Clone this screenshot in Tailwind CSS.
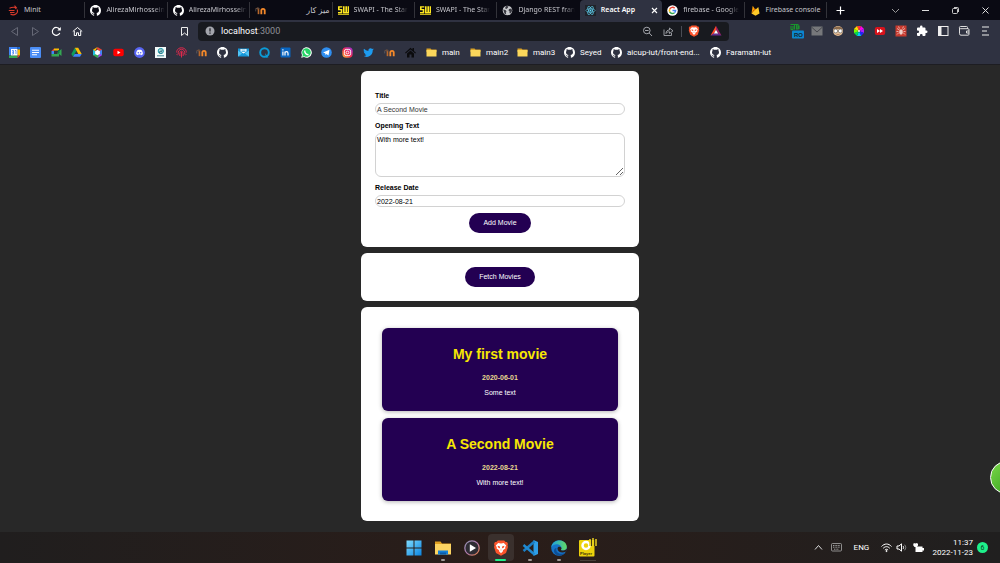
<!DOCTYPE html>
<html lang="en">
<head>
<meta charset="utf-8">
<title>React App</title>
<script src="https://cdn.jsdelivr.net/npm/@tailwindcss/browser@4"></script>
</head>
<body class="bg-[#282828]">
<svg class="hidden" aria-hidden="true">
  <symbol id="github" viewBox="0 0 16 16"><path fill="#fff" d="M8 0C3.58 0 0 3.58 0 8c0 3.54 2.29 6.53 5.47 7.59.4.07.55-.17.55-.38 0-.19-.01-.82-.01-1.49-2.01.37-2.53-.49-2.69-.94-.09-.23-.48-.94-.82-1.13-.28-.15-.68-.52-.01-.53.63-.01 1.08.58 1.23.82.72 1.21 1.87.87 2.33.66.07-.52.28-.87.51-1.07-1.78-.2-3.64-.89-3.64-3.95 0-.87.31-1.59.82-2.15-.08-.2-.36-1.02.08-2.12 0 0 .67-.21 2.2.82.64-.18 1.32-.27 2-.27s1.36.09 2 .27c1.53-1.04 2.2-.82 2.2-.82.44 1.1.16 1.92.08 2.12.51.56.82 1.27.82 2.15 0 3.07-1.87 3.75-3.65 3.95.29.25.54.73.54 1.48 0 1.07-.01 1.93-.01 2.2 0 .21.15.46.55.38A8.01 8.01 0 0 0 16 8c0-4.42-3.58-8-8-8z"/></symbol>
  <symbol id="folder" viewBox="0 0 11 11"><path fill="#d9a227" d="M.5 1.500h4l1 1h5V5H.5z"/><path fill="#fbd75b" d="M.5 3h10v6.500H.5z"/></symbol>
  <symbol id="moodle" viewBox="0 0 12 12"><path d="M0 4 3 2.500l2.500 1L3 5z" fill="#6b4f3e"/><path d="M.8 4.500V7" stroke="#777" stroke-width=".6"/><path d="M3.800 10V4.500" stroke="#b8682c" stroke-width="1.800"/><path d="M6.900 10V6c0-2.400 3.700-2.400 3.700 0v4" fill="none" stroke="#f5892a" stroke-width="2"/></symbol>
  <symbol id="brave" viewBox="0 0 16 16"><path fill="#fb542b" d="M4.800.6h6.400l1.400 1.500 1.400-.2 1 2-.5 1.400.5 1.600-2 6L8 15.800l-5-2.900-2-6 .5-1.600L1 3.900l1-2 1.400.2z"/><path fill="#fff" d="M5.200 3 8 3.400l2.800-.4 2.400 2.600-1 1.600.2 1.300-2.600 1.700.3.800L8 13.200 5.900 11l.3-.8-2.600-1.700.2-1.300-1-1.600z"/><path fill="#fb542b" d="m4.600 5.800 2.100.5.500 2.100L5 7.400zM11.400 5.800l-2.100.5-.5 2.100L11 7.400zM7.100 9.800h1.800l-.9.800z"/></symbol>
  <symbol id="swapi" viewBox="0 0 11 11"><path d="M0 1.200h4.300v1.400H1.600v1.300h2.700v4.600H0V7.100h2.700V5.200H0zM5 1.200h1.600v5.700h.8V1.200H9v5.700h.6V1.200H11v7.300H5zM0 9.200h11v.8H0z" fill="#ffe81f"/></symbol>
</svg>

<div class="flex min-h-screen flex-col">
  <header class="border-b border-[#1d1d22] bg-[#2f3241] font-['Noto_Sans','DejaVu_Sans',sans-serif] text-[7px] text-white">
    <div class="flex h-5 items-center justify-between bg-[#0a0a13]">
      <nav aria-label="Tabs" class="flex h-5 min-w-0 items-center pl-[3px] text-[#c6c6cc]">
        <div class="grid h-5 w-[824px] min-w-0 grid-cols-10 items-center">
        <a href="#" class="flex h-4 min-w-0 items-center gap-[5px] border-r border-[#33333a] pl-[5px]">
          <svg class="size-[11px] shrink-0" viewBox="0 0 11 11" fill="none" stroke="#d83a2b"><path d="M1.500 3.200c2-1 5-1 7-.5M6.500.6l2 2.200-1.500 1M.8 5.500h5.700M2 7.500h4.500M9 4.500c2 3.500-3 7-6.500 4.500" stroke-width="1.100"/></svg>
          <span class="whitespace-nowrap">Minit</span></a>
        <a href="#" class="flex h-4 min-w-0 items-center gap-[5px] border-r border-[#33333a] pr-px pl-[5px]">
          <svg class="size-[11px] shrink-0"><use href="#github"/></svg>
          <span class="whitespace-nowrap [mask-image:linear-gradient(to_right,#000_80%,transparent)]">AlirezaMirhossein</span></a>
        <a href="#" class="flex h-4 min-w-0 items-center gap-[5px] border-r border-[#33333a] pr-px pl-[5px]">
          <svg class="size-[11px] shrink-0"><use href="#github"/></svg>
          <span class="whitespace-nowrap [mask-image:linear-gradient(to_right,#000_80%,transparent)]">AlirezaMirhossein</span></a>
        <a href="#" class="flex h-4 min-w-0 items-center justify-between border-r border-[#33333a] pr-[2px] pl-[5px]">
          <svg class="size-[11px] shrink-0"><use href="#moodle"/></svg>
          <span dir="rtl" lang="fa" class="text-[8px] leading-[10px]">میز کار</span></a>
        <a href="#" class="flex h-4 min-w-0 items-center gap-[5px] border-r border-[#33333a] pr-px pl-[5px]">
          <svg class="size-[11px] shrink-0"><use href="#swapi"/></svg>
          <span class="whitespace-nowrap [mask-image:linear-gradient(to_right,#000_80%,transparent)]">SWAPI - The Star</span></a>
        <a href="#" class="flex h-4 min-w-0 items-center gap-[5px] border-r border-[#33333a] pr-px pl-[5px]">
          <svg class="size-[11px] shrink-0"><use href="#swapi"/></svg>
          <span class="whitespace-nowrap [mask-image:linear-gradient(to_right,#000_80%,transparent)]">SWAPI - The Star</span></a>
        <a href="#" class="flex h-4 min-w-0 items-center gap-[5px] pr-px pl-[5px]">
          <svg class="size-[11px] shrink-0" viewBox="0 0 11 11"><circle cx="5.500" cy="5.500" r="4.800" fill="#c8c9cc"/><path fill="#3a3a42" d="M1.200 4.500 3.500 5l1 1.200-.6 1.300.3 2L2.500 8.500zM4 1l2.500.2-.6 1.500L4.500 4 3 3.200zM7 4l2.500-.6.6 2.600-1.600 2.500-1-.6V6.200L6.500 5.500z"/></svg>
          <span class="whitespace-nowrap [mask-image:linear-gradient(to_right,#000_80%,transparent)]">Django REST fran</span></a>
        <a href="#" aria-current="page" class="flex h-5 min-w-0 items-center gap-[5px] rounded-t-sm bg-[#2f3241] pr-1 pl-[5px] text-white">
          <svg class="size-[11px] shrink-0" viewBox="0 0 11 11"><path fill="#20232a" d="M0 0h11v11H0z"/><g fill="none" stroke="#61dafb" stroke-width=".6"><ellipse cx="5.500" cy="5.500" rx="4.600" ry="1.800"/><ellipse cx="5.500" cy="5.500" rx="4.600" ry="1.800" transform="rotate(60 5.500 5.500)"/><ellipse cx="5.500" cy="5.500" rx="4.600" ry="1.800" transform="rotate(120 5.500 5.500)"/></g><circle cx="5.500" cy="5.500" r=".9" fill="#61dafb"/></svg>
          <span class="flex-1 font-semibold whitespace-nowrap">React App</span>
          <svg class="size-[7px] shrink-0" viewBox="0 0 7 7"><path d="m1 1 5 5M6 1 1 6" stroke="#fff" stroke-width="1.100"/></svg></a>
        <a href="#" class="flex h-4 min-w-0 items-center gap-[5px] border-r border-[#33333a] pr-px pl-[5px]">
          <svg class="size-[11px] shrink-0" viewBox="0 0 11 11"><circle cx="5.500" cy="5.500" r="5.300" fill="#fff"/><g fill="none" stroke-width="1.500"><path stroke="#ea4335" d="M2.700 4.200a3.100 3.100 0 0 1 5-1"/><path stroke="#fbbc05" d="M2.700 4.200a3.100 3.100 0 0 0 0 2.600"/><path stroke="#34a853" d="M2.700 6.800a3.100 3.100 0 0 0 4.800 1"/><path stroke="#4285f4" d="M5.500 5.500h3.100a3.100 3.100 0 0 1-1.100 2.300"/></g></svg>
          <span class="whitespace-nowrap [mask-image:linear-gradient(to_right,#000_80%,transparent)]">firebase - Google</span></a>
        <a href="#" class="flex h-4 min-w-0 items-center gap-[5px] border-r border-[#33333a] pl-[5px]">
          <svg class="size-[11px] shrink-0" viewBox="0 0 11 11"><path fill="#ffa000" d="M1.500 8.500 2.700.8l2 3z"/><path fill="#f57c00" d="M1.500 8.500 4.900 3.200 6.300 5z"/><path fill="#ffca28" d="M1.500 8.500 8.300 2l1.200 6.500-4 2.300z"/></svg>
          <span class="whitespace-nowrap">Firebase console</span></a>
        </div>
        <button aria-label="New tab" class="ml-[9px] shrink-0"><svg class="block size-[9px]" viewBox="0 0 9 9"><path d="M4.500.5v8M.5 4.500h8" stroke="#fff" stroke-width="1.200"/></svg></button>
      </nav>
      <div class="flex items-center gap-[21px] pr-[10px]">
        <button aria-label="Search tabs"><svg class="block size-[9px]" viewBox="0 0 9 9"><path d="m1 3 3.500 3.500L8 3" fill="none" stroke="#999"/></svg></button>
        <button aria-label="Minimize"><svg class="block size-[9px]" viewBox="0 0 9 9"><path d="M1 4.500h7" stroke="#ddd"/></svg></button>
        <button aria-label="Restore"><svg class="block size-[9px]" viewBox="0 0 9 9" fill="none" stroke="#ddd" stroke-width=".9"><rect x="1.500" y="2.500" width="5" height="5" rx="1"/><path d="M3 1.500h3.500a1 1 0 0 1 1 1V6"/></svg></button>
        <button aria-label="Close"><svg class="block size-[9px]" viewBox="0 0 9 9"><path d="m1.500 1.500 6 6M7.500 1.500l-6 6" stroke="#ddd"/></svg></button>
      </div>
    </div>

    <div class="flex h-[22px] items-center">
      <div class="flex w-[190px] shrink-0 items-center gap-[10px] pl-[9px]">
        <button aria-label="Back"><svg class="block size-[11px]" viewBox="0 0 11 11"><path d="M8.500 1.500v8L2.500 5.500z" fill="none" stroke="#666876"/></svg></button>
        <button aria-label="Forward"><svg class="block size-[11px]" viewBox="0 0 11 11"><path d="M2.500 1.500v8l6-4z" fill="none" stroke="#666876"/></svg></button>
        <button aria-label="Reload"><svg class="block size-[11px]" viewBox="0 0 11 11"><path d="M8.800 7A3.900 3.900 0 1 1 8.500 3.200" fill="none" stroke="#fff" stroke-width="1.200"/><path d="M9.800 1v3.500H6.300z" fill="#fff"/></svg></button>
        <button aria-label="Home"><svg class="block size-[11px]" viewBox="0 0 11 11"><path d="m.8 5.500 4.700-4 4.700 4M2.300 5v4.500h2.200V6.800h2v2.700h2.200V5" fill="none" stroke="#fff"/></svg></button>
        <button aria-label="Bookmark" class="ml-auto"><svg class="block size-[11px]" viewBox="0 0 11 11"><path d="M2.500 1.500h6v8L5.500 7l-3 2.500z" fill="none" stroke="#eee"/></svg></button>
      </div>
      <div class="ml-2 flex h-[19px] w-[531px] items-center rounded bg-[#181a1f] px-[7px] font-['Roboto','Liberation_Sans',sans-serif]">
        <svg class="size-[10px] shrink-0" viewBox="0 0 10 10"><circle cx="5" cy="5" r="4.500" fill="#a3a5ac"/><path d="M5 2.200v3.300M5 6.500v1.200" stroke="#181a1f" stroke-width="1.200"/></svg>
        <button aria-label="Address" class="ml-[6px] flex-1 text-left text-[9px] leading-3"><span class="text-white">localhost</span><span class="text-[#8f9198]">:3000</span></button>
        <div class="flex shrink-0 items-center">
          <svg class="size-[11px]" viewBox="0 0 11 11" fill="none" stroke="#a5a7ad"><circle cx="4.800" cy="4.500" r="3.300"/><path d="m7.200 7 2.800 3M3 4.500h3.600"/></svg>
          <svg class="ml-[10px] size-[11px]" viewBox="0 0 11 11" fill="none" stroke="#a5a7ad" stroke-width=".9"><path d="M1 3.500v6h7.500V7M3 7.500C3 5 4.500 4 6.500 4V2L10 4.800 6.500 7.500V5.800C5 5.800 4 6 3 7.500z"/></svg>
          <span class="ml-[7px] h-[11px] w-px bg-[#4a4c54]"></span>
          <svg class="ml-[6px] size-[12px]"><use href="#brave"/></svg>
          <svg class="ml-[10px] size-[12px]" viewBox="0 0 12 12"><path fill="#ff4724" d="M6 .8v4L3.800 9 .5 10.500z"/><path fill="#9e1f63" d="M6 .8v4L8.300 9l3.200 1.500z"/><path fill="#662d91" d="m.5 10.500 3.300-2.300h4.400l3.300 2.300z"/><path fill="#fff" d="M6 4.800 8.100 8.400H3.900z"/></svg>
        </div>
      </div>
      <div class="ml-auto flex items-center gap-[9px] pr-[9px]">
        <svg class="-mr-[2px] h-[16px] w-[14px]" viewBox="0 0 14 16"><path d="M.5 1.500h8M1 3v3c0 1 2 1 2 0V3M4.500 2v4.500M6.500 2v4h1.500V2M9 2.500V6" stroke="#19952d" stroke-width="1.100" fill="none"/><rect x="2" y="7.500" width="12" height="8" rx="1" fill="#0b87cf"/><text x="4" y="13.800" font-family="Liberation Sans" font-size="6" font-weight="bold" fill="#132430">RO</text></svg>
        <svg class="size-[12px]" viewBox="0 0 12 12"><path fill="#77787b" d="M.5 1.500h11v9H.5z"/><path d="M.5 2 6 7l5.500-5" fill="none" stroke="#46474d"/></svg>
        <svg class="size-[12px]" viewBox="0 0 12 12"><circle cx="6" cy="6" r="5" fill="#e2bd95"/><path d="M1.500 4C2.500.5 9.500.5 10.500 4z" fill="#8b6a4a"/><circle cx="3.700" cy="6" r="1.900" fill="#fff" stroke="#555" stroke-width=".6"/><circle cx="8.300" cy="6" r="1.900" fill="#fff" stroke="#555" stroke-width=".6"/><path d="M4.500 9.500h3" stroke="#b0765a" stroke-width=".8"/></svg>
        <svg class="size-[12px]" viewBox="-6 -6 12 12"><path fill="#f33" d="M0 0-2-5h4z"/><path fill="#f0e" d="M0 0 2-5l3 3z"/><path fill="#a2f" d="m0 0 5-2v4z"/><path fill="#22f" d="m0 0 5 2-3 3z"/><path fill="#0cf" d="m0 0 2 5h-4z"/><path fill="#0d5" d="m0 0-2 5-3-3z"/><path fill="#7f0" d="m0 0-5 2v-4z"/><path fill="#fd0" d="m0 0-5-2 3-3z"/><circle r="1" fill="#eee"/></svg>
        <svg class="size-[12px]" viewBox="0 0 12 12"><rect x=".8" y="2" width="10.400" height="8" rx="2" fill="#d8131c"/><path fill="#fff" d="m3 4 3 2-3 2zM6 4l3 2-3 2z"/></svg>
        <svg class="size-[12px]" viewBox="0 0 12 12"><path fill="#c83a2e" d="M.5.500h11v11H.5z"/><path d="m2 3.500 2.500 1.500M10 3.500 7.500 5M2 9.500l2-2M10 9.500l-2-2M3.500 1.500l1 2M8.500 1.500l-1 2M1.500 6.500h2M8.500 6.500h2" stroke="#f3ddd8" stroke-width=".7"/><ellipse cx="6" cy="7" rx="1.800" ry="2.700" fill="#f0cfc8"/></svg>
        <svg class="size-[12px]" viewBox="0 0 24 24"><path fill="#fff" d="M20.500 11H19V7a2 2 0 0 0-2-2h-4V3.500a2.500 2.500 0 0 0-5 0V5H4a2 2 0 0 0-2 2v3.800h1.500a2.700 2.700 0 0 1 0 5.400H2V20a2 2 0 0 0 2 2h3.800v-1.500a2.700 2.700 0 0 1 5.400 0V22H17a2 2 0 0 0 2-2v-4h1.500a2.500 2.500 0 0 0 0-5z"/></svg>
        <svg class="size-[12px]" viewBox="0 0 12 12"><rect x="1.500" y="1.500" width="9.500" height="9" fill="none" stroke="#eee"/><path fill="#eee" d="M1.500 1.500h3v9h-3z"/></svg>
        <svg class="size-[12px]" viewBox="0 0 12 12" fill="none" stroke="#ddd"><path d="M9.500 4V2.500a1 1 0 0 0-1-1H2.500a1 1 0 0 0 0 2.200H10a1 1 0 0 1 1 1v4.500a1 1 0 0 1-1 1H3a1.500 1.500 0 0 1-1.500-1.500V3"/><path d="M11 6H8.500v2H11"/></svg>
        <svg class="size-[12px]" viewBox="0 0 12 12"><path d="M3 2h7M3 6h5M3 10h7" stroke="#eee"/></svg>
      </div>
    </div>

    <nav aria-label="Bookmarks" class="flex h-[22px] items-center pb-[2px] pl-[9px] font-['Roboto','Liberation_Sans',sans-serif] text-[8px] leading-[11px]">
      <div class="flex w-[407px] shrink-0 items-center justify-between">
        <svg class="size-[11px]" viewBox="0 0 11 11"><path fill="#4285f4" d="M0 0h8.500v2H2v6.500H0z"/><path fill="#1967d2" d="M8.500 0H11v2.500H8.500z"/><path fill="#fbbc04" d="M8.500 2.500H11v6H8.500z"/><path fill="#34a853" d="M0 8.500h8.500V11H0z"/><path fill="#ea4335" d="M8.500 8.500H11L8.500 11z"/><path fill="#fff" d="M2 2h6.500v6.500H2z"/><path d="M3 3.500h1.500v1.700H3.300 4.500v1.800H3M6 3.500h1V7" fill="none" stroke="#4285f4" stroke-width=".8"/></svg>
        <svg class="size-[11px]" viewBox="0 0 11 11"><rect width="11" height="11" rx="1" fill="#4a8df6"/><path d="M2 3.200h7M2 5.500h7M2 7.800h5" stroke="#fff" stroke-width="1.100"/></svg>
        <svg class="size-[11px]" viewBox="0 0 11 11"><path fill="#fbbc04" d="M3 1.500h5v2H3z"/><path fill="#ea4335" d="M.5 4 3 1.500V4z"/><path fill="#4285f4" d="M.5 4H3v3H.5z"/><path fill="#34a853" d="M.5 7H8v2.500H.5zM6.500 5.500 10.500 2v7L8 7v2.500H6.500z"/><path fill="#0b8043" d="M7 3h1.500v3L7 7z"/></svg>
        <svg class="size-[11px]" viewBox="0 0 11 11"><path fill="#0f9d58" d="M3.800.8 5.500 3.700 2 9.800.3 6.900z"/><path fill="#fbbc04" d="M3.800.8h3.400l3.500 6.100H7.300z"/><path fill="#4285f4" d="M3.700 6.900h7L9 9.800H2z"/></svg>
        <svg class="size-[11px]" viewBox="0 0 11 11"><path fill="#fbbc04" d="M5.500 0 1 2.700l2 1.800z"/><path fill="#ea4335" d="m5.500 0 4.500 2.700-2 2.500L5 2z"/><path fill="#4285f4" d="M10 2.700v5.500L7.500 7V4z"/><path fill="#a142f4" d="M10 8.200 5.500 11V8.500L8 6.500z"/><path fill="#34a853" d="M5.500 11 1 8.200 3 6l4 2.500z"/><path fill="#24c1e0" d="M1 8.200V2.700l2.500 1.800v3z"/><path fill="#fff" d="m5.500 2.800 2.400 1.400v2.700L5.500 8.300 3.100 6.900V4.200z"/></svg>
        <svg class="size-[11px]" viewBox="0 0 11 11"><rect x=".3" y="1.800" width="10.400" height="7.400" rx="1.800" fill="#f00"/><path fill="#fff" d="m4.500 3.800 3 1.700-3 1.700z"/></svg>
        <svg class="size-[11px]" viewBox="0 0 11 11"><circle cx="5.500" cy="5.500" r="5.400" fill="#5865f2"/><path fill="#fff" d="M3.300 3.200c1.400-.6 3-.6 4.400 0C8.600 4.500 9 6 8.800 7.300c-.6.500-1.200.8-1.800.9l-.4-.7H4.400l-.4.700c-.6-.1-1.200-.4-1.800-.9C2 6 2.400 4.500 3.300 3.200z"/><circle cx="4.300" cy="5.700" r=".8" fill="#5865f2"/><circle cx="6.700" cy="5.700" r=".8" fill="#5865f2"/></svg>
        <svg class="size-[11px]" viewBox="0 0 11 11"><path fill="#f4fbfb" d="M0 0h11v11H0z"/><circle cx="5.800" cy="4" r="2.600" fill="none" stroke="#1595a5"/><path d="M4.500 3h2.600v1.500H4.500v1.500h2.800M2 8.800h7" stroke="#156b7a" stroke-width=".8" fill="none"/></svg>
        <svg class="size-[11px]" viewBox="0 0 11 11" fill="none" stroke="#e0294d"><path d="M.7 5.500C.5-.8 10.500-.8 10.300 5.500M2.200 7.500C1.300.5 9.700.5 8.800 7.500M3.900 9C3 2.500 8 2.500 7.100 9M5.500 4.800V10.500M.8 7.200l.6 1M10.200 7.200l-.6 1"/></svg>
        <svg class="size-[11px]"><use href="#moodle"/></svg>
        <svg class="size-[11px]"><use href="#github"/></svg>
        <svg class="size-[11px]" viewBox="0 0 11 11"><path fill="#1697d8" d="M0 1.500h11v8H0z"/><path fill="#fff" d="M2.500 2h6v2.500l-3 2-3-2z"/><path fill="#53c4f5" d="m0 3.500 4 3L0 9.500zM11 3.500l-4 3 4 3z"/><path d="M3.500 3h4M3.500 4.500h4" stroke="#1697d8" stroke-width=".7"/></svg>
        <svg class="size-[11px]" viewBox="0 0 11 11"><circle cx="5.500" cy="5.500" r="4.300" fill="none" stroke="#0b9bd7" stroke-width="1.900"/><path d="m6 6 3.500 4.500H7z" fill="#0b9bd7"/></svg>
        <svg class="size-[11px]" viewBox="0 0 11 11"><rect x=".5" y=".5" width="10" height="10" rx="1" fill="#0a66c2"/><path d="M2.900 4.500v4M2.900 2.300v1.200M5 8.500v-4M5 6.200c0-2 3-2 3 0v2.300" fill="none" stroke="#fff" stroke-width="1.200"/></svg>
        <svg class="size-[11px]" viewBox="0 0 11 11"><path fill="#fff" d="m.2 10.800.8-2.900A5.200 5.200 0 1 1 3 10z"/><path fill="#25d366" d="m1.300 9.700.5-1.900A4.300 4.300 0 1 1 3.200 9.200z"/><path d="M3.700 3.500c0 2.500 1.700 4 3.800 4.200" fill="none" stroke="#fff" stroke-width="1.400"/></svg>
        <svg class="size-[11px]" viewBox="0 0 11 11"><circle cx="5.500" cy="5.500" r="5.300" fill="#2f8ef0"/><path fill="#fff" d="m2 5.400 6.500-2.700-1 5.700-2-1.300-1 1-.3-1.800z"/></svg>
        <svg class="size-[11px]" viewBox="0 0 11 11"><defs><linearGradient id="ig" x1="0" y1="1" x2="1" y2="0"><stop stop-color="#fdc23c"/><stop offset=".45" stop-color="#f6304b"/><stop offset="1" stop-color="#9a2be0"/></linearGradient></defs><rect x=".3" y=".3" width="10.400" height="10.400" rx="4" fill="url(#ig)"/><rect x="2.400" y="2.400" width="6.200" height="6.200" rx="1.800" fill="none" stroke="#fff" stroke-width=".9"/><circle cx="5.500" cy="5.500" r="1.400" fill="none" stroke="#fff" stroke-width=".9"/></svg>
        <svg class="size-[11px]" viewBox="0 0 24 24"><path fill="#1d9bf0" d="M23.600 4.900c-.8.400-1.700.6-2.700.8 1-.6 1.700-1.500 2-2.600-.9.500-1.900.9-3 1.100a4.700 4.700 0 0 0-8 4.300A13.400 13.400 0 0 1 2.200 3.600a4.700 4.700 0 0 0 1.500 6.300c-.8 0-1.500-.2-2.200-.6a4.700 4.700 0 0 0 3.800 4.700c-.7.200-1.400.2-2.100.1a4.700 4.700 0 0 0 4.400 3.300A9.500 9.500 0 0 1 .6 19.300a13.400 13.400 0 0 0 20.600-12c1-.7 1.800-1.500 2.400-2.400z"/></svg>
        <svg class="size-[11px]"><use href="#moodle"/></svg>
        <svg class="size-[11px]" viewBox="0 0 11 11"><path fill="#0b0b0d" d="M5.500.8 0 5.800l.8.800L5.500 2.600l4.700 4 .8-.8L9 4V1H7.500v1.600zM2 6.500l3.500-3 3.500 3v4H6.500v-3h-2v3H2z"/></svg>
      </div>
      <div class="ml-[10px] flex items-center whitespace-nowrap">
        <a href="#" class="flex w-[44px] items-center gap-[5px]"><svg class="size-[11px] shrink-0"><use href="#folder"/></svg>main</a>
        <a href="#" class="flex w-[47px] items-center gap-[5px]"><svg class="size-[11px] shrink-0"><use href="#folder"/></svg>main2</a>
        <a href="#" class="flex w-[47px] items-center gap-[5px]"><svg class="size-[11px] shrink-0"><use href="#folder"/></svg>main3</a>
        <a href="#" class="flex w-[47px] items-center gap-[5px]"><svg class="size-[11px] shrink-0"><use href="#github"/></svg>Seyed</a>
        <a href="#" class="flex w-[99px] items-center gap-[5px]"><svg class="size-[11px] shrink-0"><use href="#github"/></svg>aicup-iut/front-end...</a>
        <a href="#" class="flex items-center gap-[5px]"><svg class="size-[11px] shrink-0"><use href="#github"/></svg>Faramatn-iut</a>
      </div>
    </nav>
  </header>

  <main class="flex flex-1 flex-col items-center gap-[6px] pt-[6px] pb-[11px] font-['Liberation_Sans',sans-serif] text-[7px] leading-[8px] text-black">
    <section class="w-[90%] max-w-[278px] rounded-md bg-white p-[14px]">
      <form class="flex flex-col gap-[6px]">
        <div class="flex flex-col gap-[7px] pt-[7px]">
          <div class="flex flex-col gap-[3px]">
            <label for="title" class="font-bold">Title</label>
            <input id="title" type="text" value="A Second Movie" class="h-3 rounded-md border border-[#d2d2d2] px-px text-[#333]">
          </div>
          <div class="flex flex-col gap-[3px]">
            <label for="opening" class="font-bold">Opening Text</label>
            <textarea id="opening" class="block h-11 resize-y rounded-md border border-[#d2d2d2] px-px py-[2px]">With more text!</textarea>
          </div>
          <div class="flex flex-col gap-[3px]">
            <label for="date" class="font-bold">Release Date</label>
            <input id="date" type="text" value="2022-08-21" class="h-3 rounded-md border border-[#d2d2d2] px-px">
          </div>
        </div>
        <button type="button" class="h-5 self-center rounded-full bg-[#230052] px-[14px] text-white">Add Movie</button>
      </form>
    </section>

    <section class="flex w-[90%] max-w-[278px] justify-center rounded-md bg-white p-[14px]">
      <button type="button" class="h-5 rounded-full bg-[#230052] px-[14px] text-white">Fetch Movies</button>
    </section>

    <section class="w-[90%] max-w-[278px] rounded-md bg-white px-[21px] pt-[21px] pb-5">
      <ul class="flex flex-col gap-[7px] text-center text-white">
        <li class="rounded-md bg-[#230052] px-[14px] pt-[18px] pb-[14px] shadow-[0_1px_4px_rgba(0,0,0,0.3)]">
          <h2 class="text-[14px] leading-4 font-bold text-[#f7e702]">My first movie</h2>
          <h3 class="mt-3 font-bold text-[#e8d98f]">2020-06-01</h3>
          <p class="mt-[7px]">Some text</p>
        </li>
        <li class="rounded-md bg-[#230052] px-[14px] pt-[18px] pb-[14px] shadow-[0_1px_4px_rgba(0,0,0,0.3)]">
          <h2 class="text-[14px] leading-4 font-bold text-[#f7e702]">A Second Movie</h2>
          <h3 class="mt-3 font-bold text-[#e8d98f]">2022-08-21</h3>
          <p class="mt-[7px]">With more text!</p>
        </li>
      </ul>
    </section>
  </main>

  <footer class="grid h-[31px] grid-cols-[1fr_auto_1fr] items-center bg-linear-to-r from-[#201e1e] via-[#2a1d19] to-[#201f1f] font-['Roboto','Liberation_Sans',sans-serif] text-[8px] leading-[10px] text-white">
    <span></span>
    <nav aria-label="Taskbar" class="flex items-center gap-[3px] pl-px">
      <button aria-label="Start" class="flex h-[27px] w-[26px] flex-col items-center justify-center"><svg class="size-4" viewBox="0 0 16 16"><defs><linearGradient id="win" x1="0" y1="0" x2="1" y2="1"><stop stop-color="#7fdcff"/><stop offset="1" stop-color="#0a84e0"/></linearGradient></defs><path fill="url(#win)" d="M.5.500h7v7h-7zM8.500.500h7v7h-7zM.5 8.500h7v7h-7zM8.500 8.500h7v7h-7z"/></svg></button>
      <button aria-label="File Explorer" class="flex h-[27px] w-[26px] flex-col items-center justify-end"><svg class="mb-[3px] size-4" viewBox="0 0 16 16"><path fill="#e0a020" d="M0 1.500h5.500l1.500 2H16v5H0z"/><path fill="#fcd462" d="M0 4h16v10.500H0z"/><path fill="#1380d8" d="M3 10.500h10v4H3z"/><path fill="#0b5ca8" d="M5 12.500h6v2H5z"/></svg><span class="h-[2px] w-1 rounded bg-[#a09b99]"></span></button>
      <button aria-label="Media Player" class="flex h-[27px] w-[26px] flex-col items-center justify-center"><svg class="size-4" viewBox="0 0 16 16"><defs><linearGradient id="mp" x1="0" y1="0" x2="1" y2="1"><stop stop-color="#8c8fa8"/><stop offset=".5" stop-color="#b07ab0"/><stop offset="1" stop-color="#e08040"/></linearGradient></defs><circle cx="8" cy="8" r="7.200" fill="#2e2c33" stroke="url(#mp)" stroke-width="1.300"/><path fill="#fff" d="M5.800 4.300 12 8l-6.200 3.700z"/></svg></button>
      <button aria-label="Brave" class="flex h-[27px] w-[26px] flex-col items-center justify-end rounded-sm bg-[#3a302d]"><svg class="mb-[3px] size-4"><use href="#brave"/></svg><span class="h-[2px] w-[11px] rounded bg-[#1ef08a]"></span></button>
      <button aria-label="Visual Studio Code" class="flex h-[27px] w-[26px] flex-col items-center justify-end"><svg class="mb-[3px] size-4" viewBox="0 0 16 16"><path fill="#2f9fe8" d="M11.500 0 16 2v12l-4.500 2z"/><path fill="none" stroke="#1b7fc6" stroke-width="2.400" d="M12.500 1.500 1.500 11"/><path fill="none" stroke="#1f8ad2" stroke-width="2.400" d="M1.500 5 12.500 14.500"/></svg><span class="h-[2px] w-1 rounded bg-[#a09b99]"></span></button>
      <button aria-label="Edge" class="flex h-[27px] w-[26px] flex-col items-center justify-end"><svg class="mb-[3px] size-4" viewBox="0 0 16 16"><defs><linearGradient id="edge" x1="0" y1="0" x2="1" y2="0"><stop stop-color="#1b9de2"/><stop offset="1" stop-color="#62dc62"/></linearGradient></defs><circle cx="8" cy="8" r="7.800" fill="#1673c8"/><path fill="url(#edge)" d="M.2 7.500C1-1.500 15.500-2.300 15.800 7c0 3-3 4-5.300 3.300-1.300-.5-.3-1 0-2C10.500 4 3 2.500.2 7.500z"/><path fill="#0d4f96" d="M5.500 8c-1.500 4 3 7.500 8.300 5-3 4.500-10.500 3-10.800-2C3 9 4 8 5.500 8z"/><path fill="#2a1d19" d="M6.500 8.500c0 3.500 4.500 5 8.200 3.200.5-.2.700 0 .4.500L16 9l-3 1.500c-3 .5-3.500-.7-2.500-2 0-2-4-2.500-4 0z"/></svg><span class="h-[2px] w-1 rounded bg-[#a09b99]"></span></button>
      <button aria-label="Player" class="flex h-[27px] w-[26px] flex-col items-center justify-end"><svg class="mb-[3px] h-[19px] w-[18px]" viewBox="0 0 18 19"><rect y="2" width="15.500" height="16.500" rx="1" fill="#ecd20c"/><circle cx="7" cy="7.500" r="3.500" fill="none" stroke="#fff" stroke-width="2.500"/><path d="M11 1v7M14 0v8M17 1v7" stroke="#e8cf20" stroke-width="1.500"/><path d="M12.500 2v6M15.500 2v6" stroke="#453b12"/><text x="1" y="17" font-family="Liberation Sans" font-size="4" font-weight="bold" fill="#3a3208">Player</text></svg><span class="h-px w-4 bg-[#49403a]"></span></button>
    </nav>
    <div class="flex items-center justify-end pr-3">
      <svg class="size-[9px]" viewBox="0 0 9 9"><path d="m1 6.500 3.500-4 3.500 4" fill="none" stroke="#ddd"/></svg>
      <svg class="ml-[8px] h-[9px] w-[11px]" viewBox="0 0 11 9"><rect x=".5" y=".5" width="10" height="7.500" rx="1" fill="none" stroke="#aaa" stroke-width=".8"/><path d="M2 2.500h7M2 4.200h7M3 6.200h5" stroke="#aaa" stroke-width=".9" stroke-dasharray="1 .6"/></svg>
      <span class="ml-3 w-[16px]">ENG</span>
      <svg class="ml-[11px] size-[11px]" viewBox="0 0 11 11" fill="none" stroke="#fff"><path d="M.5 4.500c3-3.300 7-3.300 10 0M2.200 6.300c2-2.200 4.600-2.200 6.600 0M3.900 8c1-1 2.200-1 3.200 0"/><circle cx="5.500" cy="9" r=".6" fill="#fff"/></svg>
      <svg class="ml-1 size-[11px]" viewBox="0 0 11 11" fill="none" stroke="#fff"><path d="M1 4v3h2l2.500 2.200V1.800L3 4zM7 4c.8 1 .8 2 0 3"/><path d="M8.500 2.700c1.700 2 1.700 3.600 0 5.600" stroke="#888"/></svg>
      <svg class="ml-[6px] h-[10px] w-[11px]" viewBox="0 0 11 10"><path fill="#fff" d="M2.500 3.500h7v5.500h-7zM9.500 5H11v2.500H9.500zM.3.500h1.200V0h.7v.5h.9V0h.7v.5H5v2L3.500 4h-2L.3 2.500z"/></svg>
      <div class="ml-[9px] text-right"><div>11:37</div><div>2022-11-23</div></div>
      <span class="ml-1 flex size-[11px] items-center justify-center rounded-full bg-[#1ef08a] text-[7px] text-[#0c3a22]">6</span>
    </div>
  </footer>
</div>
<!-- Floating assistant handle, half hidden at the window's right edge -->
<div class="pointer-events-none fixed inset-y-0 right-0 w-[10px] overflow-hidden"><div class="absolute top-[461px] left-0 size-[33px] rounded-full border border-white bg-linear-to-br from-[#7bd84a] to-[#1f9a10]"></div></div>
</body>
</html>
